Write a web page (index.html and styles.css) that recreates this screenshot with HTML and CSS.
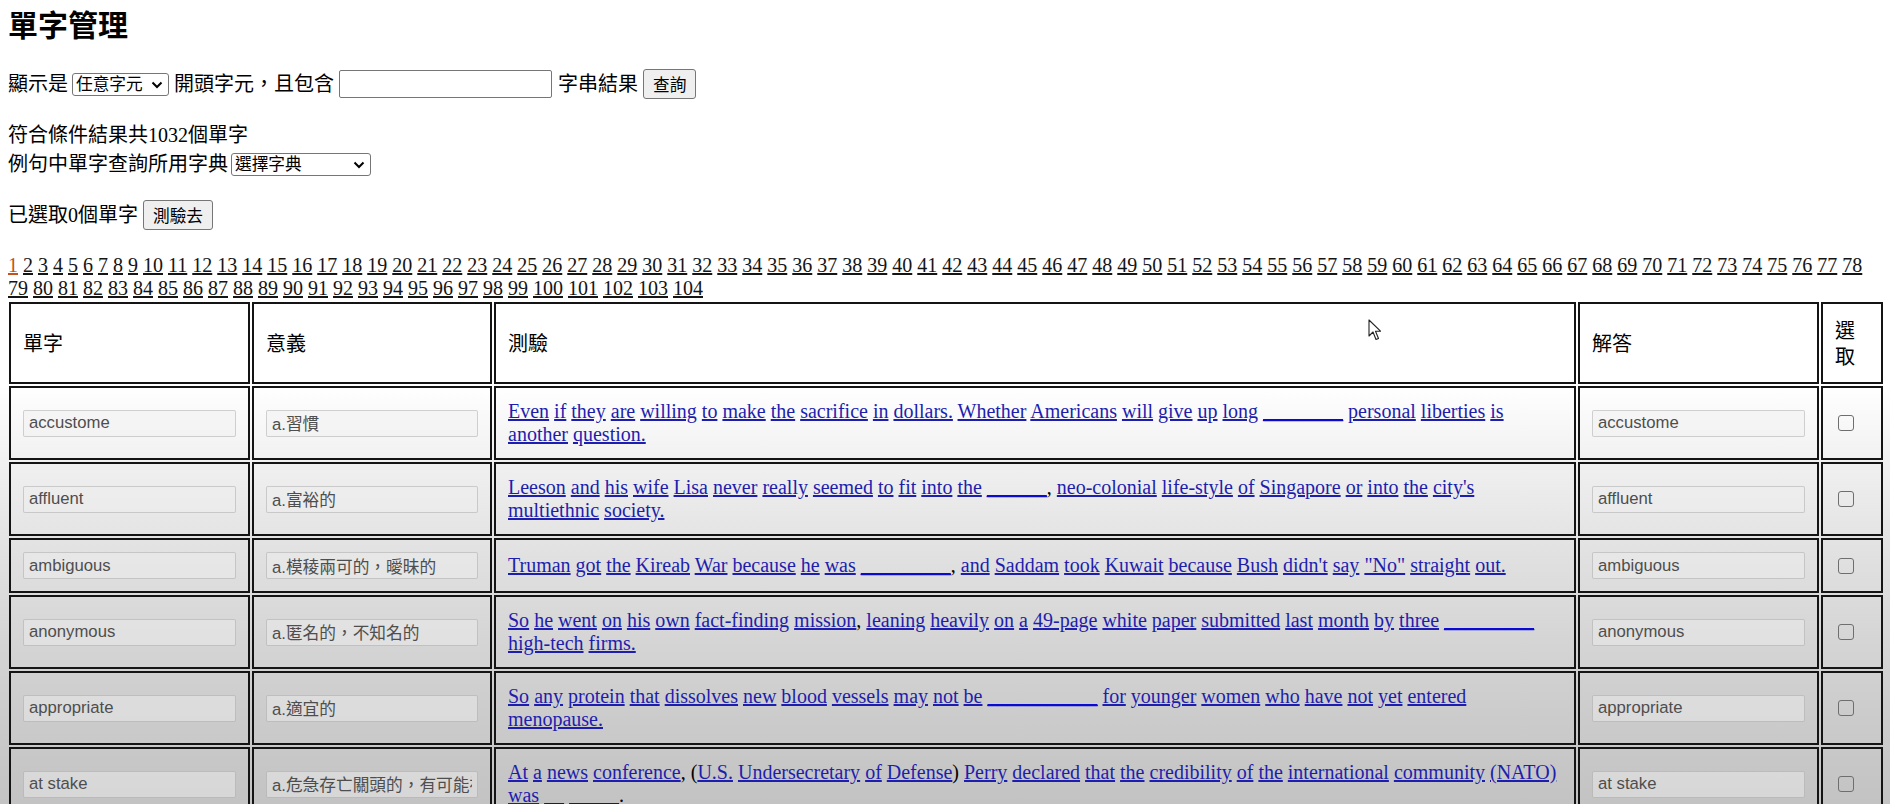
FILE: index.html
```html
<!DOCTYPE html>
<html lang="zh-Hant">
<head>
<meta charset="utf-8">
<title>單字管理</title>
<link rel="stylesheet" href="styles.css">
</head>
<body>
<h2 class="title">單字管理</h2>

<div class="search-row">
  <span>顯示是</span>
  <span class="sel-wrap sel-start">
    <select class="sel"><option>任意字元</option></select>
    <svg class="sel-arrow" width="12" height="8" viewBox="0 0 12 8" aria-hidden="true"><path d="M1.5 1.5 L6 6 L10.5 1.5" fill="none" stroke="#000" stroke-width="2"/></svg>
  </span>
  <span>開頭字元，且包含</span>
  <input class="search-box" type="text">
  <span>字串結果</span>
  <button class="btn btn-query">查詢</button>
</div>

<div class="summary">符合條件結果共1032個單字</div>
<div class="dict-row">
  <span>例句中單字查詢所用字典</span>
  <span class="sel-wrap sel-dict">
    <select class="sel"><option>選擇字典</option></select>
    <svg class="sel-arrow" width="12" height="8" viewBox="0 0 12 8" aria-hidden="true"><path d="M1.5 1.5 L6 6 L10.5 1.5" fill="none" stroke="#000" stroke-width="2"/></svg>
  </span>
</div>

<div class="selected-row">
  <span>已選取0個單字</span>
  <button class="btn btn-test">測驗去</button>
</div>

<div class="pager">
<a href="#" class="current">1</a> <a href="#">2</a> <a href="#">3</a> <a href="#">4</a> <a href="#">5</a> <a href="#">6</a> <a href="#">7</a> <a href="#">8</a> <a href="#">9</a> <a href="#">10</a> <a href="#">11</a> <a href="#">12</a> <a href="#">13</a> <a href="#">14</a> <a href="#">15</a> <a href="#">16</a> <a href="#">17</a> <a href="#">18</a> <a href="#">19</a> <a href="#">20</a> <a href="#">21</a> <a href="#">22</a> <a href="#">23</a> <a href="#">24</a> <a href="#">25</a> <a href="#">26</a> <a href="#">27</a> <a href="#">28</a> <a href="#">29</a> <a href="#">30</a> <a href="#">31</a> <a href="#">32</a> <a href="#">33</a> <a href="#">34</a> <a href="#">35</a> <a href="#">36</a> <a href="#">37</a> <a href="#">38</a> <a href="#">39</a> <a href="#">40</a> <a href="#">41</a> <a href="#">42</a> <a href="#">43</a> <a href="#">44</a> <a href="#">45</a> <a href="#">46</a> <a href="#">47</a> <a href="#">48</a> <a href="#">49</a> <a href="#">50</a> <a href="#">51</a> <a href="#">52</a> <a href="#">53</a> <a href="#">54</a> <a href="#">55</a> <a href="#">56</a> <a href="#">57</a> <a href="#">58</a> <a href="#">59</a> <a href="#">60</a> <a href="#">61</a> <a href="#">62</a> <a href="#">63</a> <a href="#">64</a> <a href="#">65</a> <a href="#">66</a> <a href="#">67</a> <a href="#">68</a> <a href="#">69</a> <a href="#">70</a> <a href="#">71</a> <a href="#">72</a> <a href="#">73</a> <a href="#">74</a> <a href="#">75</a> <a href="#">76</a> <a href="#">77</a> <a href="#">78</a> <a href="#">79</a> <a href="#">80</a> <a href="#">81</a> <a href="#">82</a> <a href="#">83</a> <a href="#">84</a> <a href="#">85</a> <a href="#">86</a> <a href="#">87</a> <a href="#">88</a> <a href="#">89</a> <a href="#">90</a> <a href="#">91</a> <a href="#">92</a> <a href="#">93</a> <a href="#">94</a> <a href="#">95</a> <a href="#">96</a> <a href="#">97</a> <a href="#">98</a> <a href="#">99</a> <a href="#">100</a> <a href="#">101</a> <a href="#">102</a> <a href="#">103</a> <a href="#">104</a>
</div>

<table class="words">
  <thead>
    <tr>
      <th class="c-word">單字</th>
      <th class="c-mean">意義</th>
      <th class="c-test">測驗</th>
      <th class="c-ans">解答</th>
      <th class="c-pick">選取</th>
    </tr>
  </thead>
  <tbody>
    <tr>
      <td><input class="field" type="text" value="accustome" readonly></td>
      <td><input class="field" type="text" value="a.習慣" readonly></td>
      <td class="sentence"><a href="#">Even</a> <a href="#">if</a> <a href="#">they</a> <a href="#">are</a> <a href="#">willing</a> <a href="#">to</a> <a href="#">make</a> <a href="#">the</a> <a href="#">sacrifice</a> <a href="#">in</a> <a href="#">dollars.</a> <a href="#">Whether</a> <a href="#">Americans</a> <a href="#">will</a> <a href="#">give</a> <a href="#">up</a> <a href="#">long</a> <a href="#" class="blank">________</a> <a href="#">personal</a> <a href="#">liberties</a> <a href="#">is</a> <a href="#">another</a> <a href="#">question.</a></td>
      <td><input class="field" type="text" value="accustome" readonly></td>
      <td><input class="pick" type="checkbox"></td>
    </tr>
    <tr>
      <td><input class="field" type="text" value="affluent" readonly></td>
      <td><input class="field" type="text" value="a.富裕的" readonly></td>
      <td class="sentence"><a href="#">Leeson</a> <a href="#">and</a> <a href="#">his</a> <a href="#">wife</a> <a href="#">Lisa</a> <a href="#">never</a> <a href="#">really</a> <a href="#">seemed</a> <a href="#">to</a> <a href="#">fit</a> <a href="#">into</a> <a href="#">the</a> <a href="#" class="blank">______</a>, <a href="#">neo-colonial</a> <a href="#">life-style</a> <a href="#">of</a> <a href="#">Singapore</a> <a href="#">or</a> <a href="#">into</a> <a href="#">the</a> <a href="#">city's</a> <a href="#">multiethnic</a> <a href="#">society.</a></td>
      <td><input class="field" type="text" value="affluent" readonly></td>
      <td><input class="pick" type="checkbox"></td>
    </tr>
    <tr>
      <td><input class="field" type="text" value="ambiguous" readonly></td>
      <td><input class="field" type="text" value="a.模稜兩可的，曖昧的" readonly></td>
      <td class="sentence"><a href="#">Truman</a> <a href="#">got</a> <a href="#">the</a> <a href="#">Kireab</a> <a href="#">War</a> <a href="#">because</a> <a href="#">he</a> <a href="#">was</a> <a href="#" class="blank">_________</a>, <a href="#">and</a> <a href="#">Saddam</a> <a href="#">took</a> <a href="#">Kuwait</a> <a href="#">because</a> <a href="#">Bush</a> <a href="#">didn't</a> <a href="#">say</a> <a href="#">"No"</a> <a href="#">straight</a> <a href="#">out.</a></td>
      <td><input class="field" type="text" value="ambiguous" readonly></td>
      <td><input class="pick" type="checkbox"></td>
    </tr>
    <tr>
      <td><input class="field" type="text" value="anonymous" readonly></td>
      <td><input class="field" type="text" value="a.匿名的，不知名的" readonly></td>
      <td class="sentence"><a href="#">So</a> <a href="#">he</a> <a href="#">went</a> <a href="#">on</a> <a href="#">his</a> <a href="#">own</a> <a href="#">fact-finding</a> <a href="#">mission</a>, <a href="#">leaning</a> <a href="#">heavily</a> <a href="#">on</a> <a href="#">a</a> <a href="#">49-page</a> <a href="#">white</a> <a href="#">paper</a> <a href="#">submitted</a> <a href="#">last</a> <a href="#">month</a> <a href="#">by</a> <a href="#">three</a> <a href="#" class="blank">_________</a> <a href="#">high-tech</a> <a href="#">firms.</a></td>
      <td><input class="field" type="text" value="anonymous" readonly></td>
      <td><input class="pick" type="checkbox"></td>
    </tr>
    <tr>
      <td><input class="field" type="text" value="appropriate" readonly></td>
      <td><input class="field" type="text" value="a.適宜的" readonly></td>
      <td class="sentence"><a href="#">So</a> <a href="#">any</a> <a href="#">protein</a> <a href="#">that</a> <a href="#">dissolves</a> <a href="#">new</a> <a href="#">blood</a> <a href="#">vessels</a> <a href="#">may</a> <a href="#">not</a> <a href="#">be</a> <a href="#" class="blank">___________</a> <a href="#">for</a> <a href="#">younger</a> <a href="#">women</a> <a href="#">who</a> <a href="#">have</a> <a href="#">not</a> <a href="#">yet</a> <a href="#">entered</a> <a href="#">menopause.</a></td>
      <td><input class="field" type="text" value="appropriate" readonly></td>
      <td><input class="pick" type="checkbox"></td>
    </tr>
    <tr>
      <td><input class="field" type="text" value="at stake" readonly></td>
      <td><input class="field" type="text" value="a.危急存亡關頭的，有可能被犧牲的" readonly></td>
      <td class="sentence"><a href="#">At</a> <a href="#">a</a> <a href="#">news</a> <a href="#">conference</a>, (<a href="#">U.S.</a> <a href="#">Undersecretary</a> <a href="#">of</a> <a href="#">Defense</a>) <a href="#">Perry</a> <a href="#">declared</a> <a href="#">that</a> <a href="#">the</a> <a href="#">credibility</a> <a href="#">of</a> <a href="#">the</a> <a href="#">international</a> <a href="#">community</a> <a href="#">(NATO)</a> <a href="#">was</a> <a href="#" class="blank">__</a> <a href="#" class="blank">_____</a>.</td>
      <td><input class="field" type="text" value="at stake" readonly></td>
      <td><input class="pick" type="checkbox"></td>
    </tr>
  </tbody>
</table>

<svg class="cursor" width="14" height="22" viewBox="0 0 14 22" aria-hidden="true">
  <path d="M1 1 L1 17 L5 13 L8 20.5 L10.5 19.5 L7.5 12.2 L12.5 12.2 Z" fill="#fff" stroke="#222" stroke-width="1.1" stroke-linejoin="round"/>
</svg>
</body>
</html>
```

FILE: styles.css
```css
html {
  background: linear-gradient(to bottom,
    #ffffff 0px,
    #ffffff 385px,
    #efefef 470px,
    #e0e0e0 560px,
    #d5d5d5 640px,
    #cbcbcb 720px,
    #c3c3c3 804px) no-repeat;
  background-color: #c3c3c3;
}

body {
  margin: 0;
  padding: 0 8px;
  font-family: "Liberation Serif", "Noto Sans CJK TC", serif;
  font-size: 20px;
  line-height: 23px;
  color: #000;
}

.title {
  margin: 0;
  padding-top: 5px;
  font-family: "Noto Sans CJK TC", "Liberation Sans", sans-serif;
  font-size: 30px;
  line-height: 36px;
  font-weight: 700;
}

.search-row,
.dict-row,
.selected-row {
  display: flex;
  align-items: center;
  gap: 5px;
}

.search-row {
  margin-top: 28px;
  height: 30px;
}

.summary {
  margin-top: 25px;
  height: 23px;
}

.dict-row {
  margin-top: 5px;
  height: 25px;
}

.selected-row {
  margin-top: 23px;
  height: 30px;
}

.sel-wrap {
  position: relative;
  display: inline-flex;
  height: 23px;
}

.sel-start { width: 97px; margin-left: -1px; }
.sel-dict { width: 140px; margin-left: -2px; }

.sel {
  appearance: none;
  -webkit-appearance: none;
  box-sizing: border-box;
  width: 100%;
  height: 23px;
  padding: 0 22px 0 3px;
  font-family: "Liberation Sans", "Noto Sans CJK TC", sans-serif;
  font-size: 16.7px;
  line-height: 21px;
  color: #000;
  background: #fff;
  border: 1px solid #767676;
  border-radius: 3px;
}

.sel-arrow {
  position: absolute;
  right: 6px;
  top: 8px;
  pointer-events: none;
}

.search-box {
  box-sizing: border-box;
  width: 213px;
  height: 28px;
  border: 1px solid #767676;
  border-radius: 2px;
  background: #fff;
  margin-right: 1px;
}

.btn {
  box-sizing: border-box;
  height: 30px;
  padding: 0 9px;
  font-family: "Noto Sans CJK TC", "Liberation Sans", sans-serif;
  font-size: 16.7px;
  line-height: 1;
  color: #000;
  background: #efefef;
  border: 1px solid #767676;
  border-radius: 3px;
}

.pager {
  margin-top: 24px;
  line-height: 23px;
}

.pager a {
  color: #141414;
  text-decoration: underline;
}

.pager a.current {
  color: #c8501e;
}

.words {
  box-sizing: border-box;
  width: 1878px;
  table-layout: fixed;
  border-collapse: separate;
  border-spacing: 2px;
  margin-left: -1px;
}

.words th,
.words td {
  box-sizing: border-box;
  border: 2px solid #141414;
  padding: 12px;
  vertical-align: middle;
  text-align: left;
}

.words th {
  font-weight: 400;
  line-height: 26px;
  font-family: "Noto Sans CJK TC", "Liberation Sans", sans-serif;
  padding-top: 13px;
  padding-bottom: 13px;
}

.c-word { width: 241px; }
.c-mean { width: 240px; }
.c-test { width: 1082px; }
.c-ans  { width: 241px; }
.c-pick { width: 62px; }

.words td {
  line-height: 23px;
}

.field {
  box-sizing: border-box;
  display: block;
  width: 100%;
  height: 27px;
  margin: 0;
  padding: 0 5px;
  font-family: "Liberation Sans", "Noto Sans CJK TC", sans-serif;
  font-size: 16.7px;
  color: #4e4e4e;
  background: rgba(239, 239, 239, 0.45);
  border: 1px solid rgba(118, 118, 118, 0.3);
  border-radius: 2px;
  outline: none;
}

.sentence a {
  color: #1e1eae;
  text-decoration: underline;
}

.sentence a.blank {
  color: #0a0ad2;
}

.pick {
  appearance: none;
  -webkit-appearance: none;
  display: block;
  box-sizing: border-box;
  width: 16px;
  height: 16px;
  margin: 0 0 0 3px;
  border: 1.5px solid #6e6e6e;
  border-radius: 3px;
  background: transparent;
}

.cursor {
  position: absolute;
  left: 1368px;
  top: 319px;
}
```
